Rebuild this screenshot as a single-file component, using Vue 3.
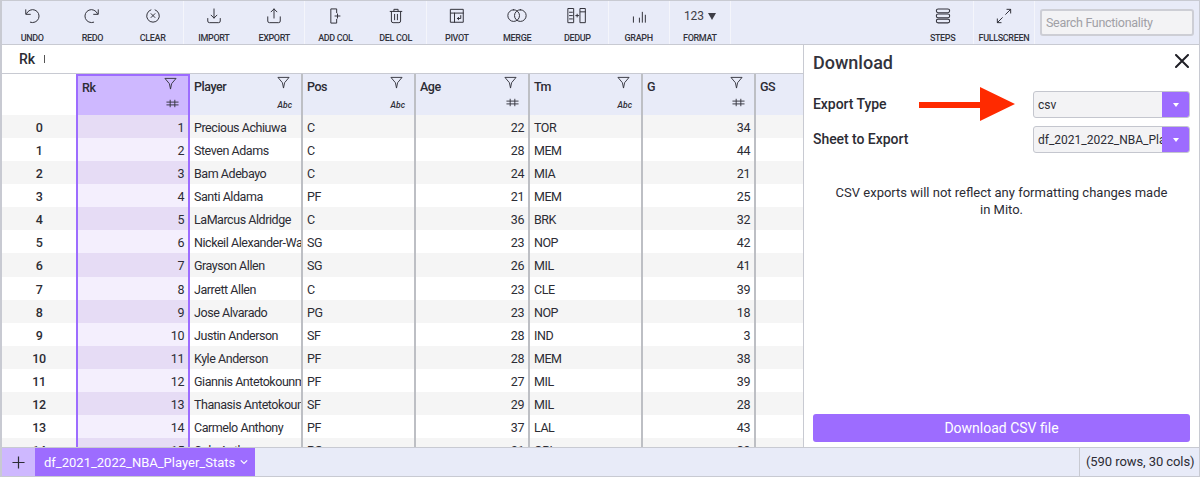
<template>
  <div class="mito">
    <div class="toolbar">
      <div v-for="(group, g) in toolbarGroups" :key="g" class="tool-group">
        <div v-for="tool in group" :key="tool.label" class="tool">
          <span v-if="tool.text" class="tool-text">123<i class="tri"></i></span>
          <svg v-else class="tool-icon" viewBox="0 0 24 24" fill="none" stroke="#33333c" stroke-width="1.2" stroke-linecap="round" stroke-linejoin="round">
            <path v-for="d in tool.paths" :key="d" :d="d" />
          </svg>
          <span class="tool-label">{{ tool.label }}</span>
        </div>
      </div>
      <div class="toolbar-right">
        <div class="tool-group">
          <div class="tool">
            <svg class="tool-icon" viewBox="0 0 24 24" fill="none" stroke="#33333c" stroke-width="1.3">
              <rect x="4" y="3.5" width="16" height="4.5" rx="2.2" />
              <rect x="4" y="9.6" width="16" height="4.5" rx="2.2" />
              <rect x="4" y="15.7" width="16" height="4.5" rx="2.2" />
            </svg>
            <span class="tool-label">STEPS</span>
          </div>
        </div>
        <div class="tool-group">
          <div class="tool">
            <svg class="tool-icon" viewBox="0 0 24 24" fill="none" stroke="#33333c" stroke-width="1.2" stroke-linecap="round" stroke-linejoin="round">
              <path d="M14 10l6-6M15.5 4H20v4.5M10 14l-6 6M4 15.5V20h4.5" />
            </svg>
            <span class="tool-label">FULLSCREEN</span>
          </div>
        </div>
        <input class="search" placeholder="Search Functionality" />
      </div>
    </div>

    <div class="main">
      <div class="sheet">
        <div class="formula-bar"><b>Rk</b><span class="caret"></span></div>
        <div class="grid">
          <div class="grid-row head">
            <div class="cell index blank"></div>
            <div
              v-for="(col, c) in columns"
              :key="col.name"
              class="cell col-head"
              :class="[col.cls, { selected: c === 0 }]"
            >
              <div class="head-top">
                <span class="head-name">{{ col.name }}</span>
                <svg v-if="col.type" class="funnel" viewBox="0 0 14 14" fill="none" stroke="#33333c" stroke-width="1" stroke-linejoin="round">
                  <path d="M1 1.5h12L8.2 7.2 7 13 5.8 7.2z" />
                </svg>
              </div>
              <div class="head-type">
                <svg v-if="col.type === '#'" class="hash" viewBox="0 0 14 9" fill="none" stroke="#33333c" stroke-width="1">
                  <path d="M0.5 3h13M0.5 6h13M4.5 0.5v8M9.5 0.5v8" />
                </svg>
                <span v-else-if="col.type" class="abc">{{ col.type }}</span>
              </div>
            </div>
          </div>
          <div v-for="(row, i) in rows" :key="i" class="grid-row" :class="{ shade: i % 2 === 0 }">
            <div class="cell index">{{ i }}</div>
            <div class="cell num selected c-rk">{{ i + 1 }}</div>
            <div class="cell c-player">{{ row[0] }}</div>
            <div class="cell c-pos">{{ row[1] }}</div>
            <div class="cell num c-age">{{ row[2] }}</div>
            <div class="cell c-tm">{{ row[3] }}</div>
            <div class="cell num c-g">{{ row[4] }}</div>
            <div class="cell c-gs"></div>
          </div>
        </div>
      </div>

      <div class="taskpane">
        <div class="pane-head">
          <h2>Download</h2>
          <svg class="close" viewBox="0 0 14 14" fill="none" stroke="#1f1f26" stroke-width="2" stroke-linecap="round">
            <path d="M1 1l12 12M13 1L1 13" />
          </svg>
        </div>
        <div class="field">
          <label>Export Type</label>
          <svg class="arrow" viewBox="0 0 96 34">
            <path d="M0 15h61V0l35 17-35 17V21H0z" fill="#ff2a00" />
          </svg>
          <div class="select"><span>csv</span><i class="select-btn"></i></div>
        </div>
        <div class="field">
          <label>Sheet to Export</label>
          <div class="select"><span>df_2021_2022_NBA_Player_Stats</span><i class="select-btn"></i></div>
        </div>
        <p class="note">CSV exports will not reflect any formatting changes made in Mito.</p>
        <button class="download">Download CSV file</button>
      </div>
    </div>

    <div class="footer">
      <div class="add-sheet">
        <svg viewBox="0 0 14 14" fill="none" stroke="#2c2c34" stroke-width="1.3"><path d="M7 0.5v13M0.5 7h13" /></svg>
      </div>
      <div class="sheet-tab">
        df_2021_2022_NBA_Player_Stats
        <svg viewBox="0 0 10 6" fill="none" stroke="#fff" stroke-width="1.5"><path d="M1 1l4 3.8L9 1" /></svg>
      </div>
      <div class="counts">(590 rows, 30 cols)</div>
    </div>
  </div>
</template>

<script setup>
const toolbarGroups = [
  [
    { label: 'UNDO', paths: ['M5.5 9A7.8 7.8 0 1 1 10 19.5', 'M4.5 4.5V10H10'] },
    { label: 'REDO', paths: ['M18.5 9A7.8 7.8 0 1 0 14 19.5', 'M19.5 4.5V10H14'] },
    { label: 'CLEAR', paths: ['M14.5 4.6a7.6 7.6 0 1 1-5 0', 'M9.7 9.2l4.6 4.6M14.3 9.2l-4.6 4.6'] },
  ],
  [
    { label: 'IMPORT', paths: ['M12 3.5v11', 'M8.5 11l3.5 3.5 3.5-3.5', 'M4.5 15v3a2 2 0 0 0 2 2h11a2 2 0 0 0 2-2v-3'] },
    { label: 'EXPORT', paths: ['M12 14.5V3.5', 'M8.5 7L12 3.5 15.5 7', 'M4.5 13v5a2 2 0 0 0 2 2h11a2 2 0 0 0 2-2v-5'] },
  ],
  [
    { label: 'ADD COL', paths: ['M14 8V3.5H7v17h7V16', 'M12 12h6M15 9.5v5'] },
    { label: 'DEL COL', paths: ['M5 6.5h14', 'M9.5 6.5V4h5v2.5', 'M6.5 6.5V18a2 2 0 0 0 2 2h7a2 2 0 0 0 2-2V6.5', 'M10.3 10v6.5M13.7 10v6.5'] },
  ],
  [
    { label: 'PIVOT', paths: ['M4.5 4h15v15.5h-15z', 'M4.5 8.5h15M9 8.5v11', 'M16.5 11.5v3.5h-4M14 13.5L12.5 15l1.5 1.5'] },
    { label: 'MERGE', paths: ['M8 4.5a7 7 0 1 0 0 14 7 7 0 0 0 0-14z', 'M16 4.5a7 7 0 1 0 0 14 7 7 0 0 0 0-14z'] },
    { label: 'DEDUP', paths: ['M1.5 3h6.5v17H1.5z', 'M16 3h6v17h-6z', 'M16 7h6', 'M3 7.5h3.5M3 11.5h3.5M3 15.5h3.5', 'M10.5 11.5h3.5M12.2 9.8v3.4'] },
  ],
  [
    { label: 'GRAPH', paths: ['M5.3 13V19.5M12.5 14.5V19.5M16 7.5V19.5M19.6 11V19.5'] },
  ],
  [
    { label: 'FORMAT', text: true },
  ],
]

const columns = [
  { name: 'Rk', type: '#', cls: 'c-rk' },
  { name: 'Player', type: 'Abc', cls: 'c-player' },
  { name: 'Pos', type: 'Abc', cls: 'c-pos' },
  { name: 'Age', type: '#', cls: 'c-age' },
  { name: 'Tm', type: 'Abc', cls: 'c-tm' },
  { name: 'G', type: '#', cls: 'c-g' },
  { name: 'GS', type: '', cls: 'c-gs' },
]

const rows = [
  ['Precious Achiuwa', 'C', 22, 'TOR', 34],
  ['Steven Adams', 'C', 28, 'MEM', 44],
  ['Bam Adebayo', 'C', 24, 'MIA', 21],
  ['Santi Aldama', 'PF', 21, 'MEM', 25],
  ['LaMarcus Aldridge', 'C', 36, 'BRK', 32],
  ['Nickeil Alexander-Walker', 'SG', 23, 'NOP', 42],
  ['Grayson Allen', 'SG', 26, 'MIL', 41],
  ['Jarrett Allen', 'C', 23, 'CLE', 39],
  ['Jose Alvarado', 'PG', 23, 'NOP', 18],
  ['Justin Anderson', 'SF', 28, 'IND', 3],
  ['Kyle Anderson', 'PF', 28, 'MEM', 38],
  ['Giannis Antetokounmpo', 'PF', 27, 'MIL', 39],
  ['Thanasis Antetokounmpo', 'SF', 29, 'MIL', 28],
  ['Carmelo Anthony', 'PF', 37, 'LAL', 43],
  ['Cole Anthony', 'PG', 21, 'ORL', 39],
]
</script>

<style scoped>
.mito {
  width: 1200px;
  height: 477px;
  box-sizing: border-box;
  border: 1px solid #c8cad2;
  border-left-width: 2px;
  display: flex;
  flex-direction: column;
  font-family: Roboto, "Liberation Sans", sans-serif;
  color: #2c2c34;
  background: #fff;
  overflow: hidden;
}

.toolbar {
  height: 44px;
  flex: none;
  display: flex;
  background: #e8ebf8;
  border-bottom: 1px solid #c8cad2;
  box-sizing: border-box;
}

.tool-group {
  display: flex;
  border-right: 1px solid #f4f5fb;
}

.tool {
  width: 60.25px;
  display: flex;
  flex-direction: column;
  align-items: center;
  padding-top: 5px;
  box-sizing: border-box;
}

.tool-icon {
  width: 20px;
  height: 20px;
  margin-bottom: 7px;
}

.tool-text {
  height: 20px;
  margin-bottom: 7px;
  font-size: 12px;
  letter-spacing: -0.2px;
  line-height: 20px;
  color: #3d3d46;
  display: flex;
  align-items: center;
  gap: 4px;
}

.tri {
  display: inline-block;
  border-left: 4.5px solid transparent;
  border-right: 4.5px solid transparent;
  border-top: 7px solid #3d3d46;
}

.tool-label {
  font-size: 9px;
  letter-spacing: -0.35px;
  font-weight: 500;
  line-height: 10px;
  color: #33333c;
  white-space: nowrap;
}

.toolbar-right {
  margin-left: auto;
  display: flex;
  align-items: flex-start;
}

.toolbar-right .tool-group {
  height: 43px;
}

.search {
  width: 154px;
  height: 27px;
  box-sizing: border-box;
  margin: 8px 5px 0 5px;
  padding: 0 4px;
  border: 2px solid #cdced5;
  border-radius: 3px;
  background: #f3f3f5;
  font: 12.5px Roboto, sans-serif;
  letter-spacing: -0.3px;
}

.search::placeholder {
  color: #a0a0a6;
}

.main {
  flex: 1;
  display: flex;
  min-height: 0;
}

.sheet {
  width: 801px;
  flex: none;
  display: flex;
  flex-direction: column;
  overflow: hidden;
}

.formula-bar {
  height: 29px;
  flex: none;
  box-sizing: border-box;
  display: flex;
  align-items: center;
  padding-left: 17px;
  border-bottom: 1px solid #c8cad2;
  font-size: 14px;
}

.formula-bar b {
  font-weight: 500;
}

.caret {
  width: 1px;
  height: 8px;
  margin-left: 9px;
  background: #555;
}

.grid {
  flex: 1;
  overflow: hidden;
}

.grid-row {
  display: flex;
  height: 23.08px;
}

.grid-row.head {
  height: 41px;
}

.cell {
  flex: none;
  box-sizing: border-box;
  font-size: 12.5px;
  letter-spacing: -0.45px;
  line-height: 26px;
  padding: 0 4px;
  white-space: nowrap;
  overflow: hidden;
  border-right: 2px solid #bdbfc4;
}

.index {
  width: 74px;
  text-align: center;
  font-weight: 500;
  background: #fff;
  border-right: 0;
}

.shade .cell {
  background: #f5f5f5;
}

.num {
  text-align: right;
}

.c-rk { width: 114px; }
.c-player { width: 113px; }
.c-pos { width: 113px; }
.c-age { width: 114px; }
.c-tm { width: 113px; }
.c-g { width: 113px; }
.c-gs { width: 47px; border-right: 0; }

.cell.c-rk.selected {
  background: #f4effd;
  border-left: 2px solid #9d6cff;
  border-right: 2px solid #9d6cff;
}

.shade .cell.c-rk.selected {
  background: #e6dcf5;
}

.col-head {
  background: #e8ebf8;
  padding: 0 9px 0 4px;
  line-height: 14px;
  font-weight: 500;
}

.col-head.c-rk.selected {
  background: #ceb8ff;
  border-top: 2px solid #9d6cff;
}

.selected .head-top {
  margin-top: -1px;
}

.head-top {
  height: 23px;
  display: flex;
  justify-content: space-between;
  align-items: flex-start;
}

.head-name {
  margin-top: 6px;
}

.funnel {
  width: 13px;
  height: 13px;
  margin: 2px 2px 0 0;
}

.head-type {
  height: 12px;
  display: flex;
  justify-content: flex-end;
  align-items: center;
}

.abc {
  font-size: 8.5px;
  letter-spacing: 0;
  font-style: italic;
  margin-top: 3px;
}

.hash {
  width: 13px;
  height: 9px;
  margin-top: -2px;
}

.taskpane {
  flex: 1;
  box-sizing: border-box;
  border-left: 1px solid #c8cad2;
  display: flex;
  flex-direction: column;
  padding: 0 9px 5px 9px;
  min-width: 0;
}

.pane-head {
  height: 34px;
  margin-bottom: 12px;
  display: flex;
  justify-content: space-between;
  align-items: center;
  flex: none;
}

.pane-head h2 {
  margin: 0;
  font-size: 18px;
  font-weight: 500;
  color: #33333c;
}

.close {
  width: 14px;
  height: 14px;
  margin-right: 1px;
  margin-top: -2px;
}

.field {
  position: relative;
  height: 27px;
  margin-bottom: 8px;
  display: flex;
  align-items: center;
  justify-content: space-between;
  font-size: 14px;
  letter-spacing: -0.05px;
  font-weight: 500;
}

.field label {
  margin-top: -2px;
}

.arrow {
  position: absolute;
  left: 106px;
  top: -4px;
  width: 96px;
  height: 34px;
}

.select {
  width: 157px;
  height: 27px;
  box-sizing: border-box;
  display: flex;
  align-items: center;
  border: 1px solid #c4c6ce;
  border-radius: 3px;
  background: #f3f3f5;
  font-size: 12px;
  letter-spacing: 0;
  font-weight: 400;
  padding-left: 4px;
  position: relative;
  overflow: hidden;
  white-space: nowrap;
}

.select-btn {
  position: absolute;
  right: 0;
  top: 0;
  bottom: 0;
  width: 27px;
  background: #9d6cff;
}

.select-btn::after {
  content: "";
  position: absolute;
  left: 11px;
  top: 11px;
  border-left: 3px solid transparent;
  border-right: 3px solid transparent;
  border-top: 4px solid #fff;
}

.note {
  margin: 23px 20px 0;
  font-size: 13px;
  line-height: 17px;
  text-align: center;
}

.download {
  margin-top: auto;
  height: 28px;
  flex: none;
  border: 0;
  border-radius: 3px;
  background: #9d6cff;
  color: #fff;
  font: 14px Roboto, sans-serif;
}

.footer {
  height: 29px;
  flex: none;
  box-sizing: border-box;
  display: flex;
  background: #e8ebf8;
  border-top: 1px solid #c8cad2;
}

.add-sheet {
  width: 33px;
  flex: none;
  background: #ceb8ff;
  display: flex;
  align-items: center;
  justify-content: center;
}

.add-sheet svg {
  width: 13px;
  height: 13px;
}

.sheet-tab {
  width: 220px;
  flex: none;
  box-sizing: border-box;
  background: #9d6cff;
  color: #fff;
  font-size: 13px;
  display: flex;
  align-items: center;
  gap: 5px;
  padding-left: 9px;
  white-space: nowrap;
}

.sheet-tab svg {
  width: 8px;
  height: 6px;
}

.counts {
  margin-left: auto;
  width: 120px;
  box-sizing: border-box;
  border-left: 1px solid #c8cad2;
  font-size: 13px;
  letter-spacing: -0.08px;
  line-height: 28px;
  padding-left: 6px;
  white-space: nowrap;
}
</style>
